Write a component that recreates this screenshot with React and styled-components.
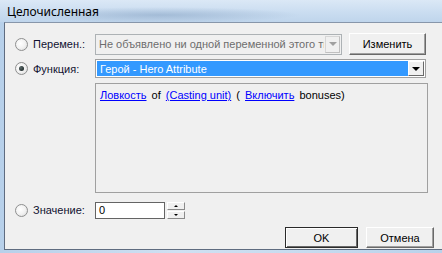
import React from 'react'
import styled, { createGlobalStyle } from 'styled-components'

const Global = createGlobalStyle`
  html, body { margin: 0; padding: 0; background: #bcd4ec; }
  body { font-family: "Liberation Sans", Arial, sans-serif; font-size: 11px; }
`

const Window = styled.div`
  width: 442px;
  height: 253px;
  display: flex;
  flex-direction: column;
  background: linear-gradient(90deg, #b7d0ea 0%, #cfe0f2 40%, #c6dbef 70%, #b9d2eb 100%);
  overflow: hidden;
`

const TitleBar = styled.div`
  height: 22px;
  display: flex;
  align-items: center;
  padding-left: 7px;
  font-family: "Noto Sans", "Open Sans", sans-serif;
  font-size: 12px;
  color: #000;
  background:
    radial-gradient(ellipse 140px 8px at 160px 15px, rgba(120,150,185,0.45), transparent),
    linear-gradient(180deg, #dbe8f6 0%, #c9dcf0 60%, #bfd5ec 100%);
`

const Client = styled.div`
  margin-left: 4px;
  height: 228px;
  background: #f0f0f0;
  border-left: 1px solid #5f6c80;
  border-top: 1px solid #8796aa;
  border-bottom: 1px solid #5f6c80;
  display: flex;
  flex-direction: column;
  padding: 10px 0 0 10px;
  box-sizing: border-box;
`

const Row = styled.div`
  display: flex;
  align-items: center;
  height: ${p => p.h}px;
  margin-top: ${p => p.mt || 0}px;
`

const Choice = styled.label`
  width: 80px;
  display: flex;
  align-items: center;
  gap: 5px;
  color: #101030;
`

const Radio = styled.span`
  width: 11px;
  height: 11px;
  border-radius: 50%;
  border: 1px solid #8e8f8f;
  background: radial-gradient(circle at 40% 40%, #ffffff 0%, #f2f2f2 50%, #d6d6d6 100%);
  display: flex;
  align-items: center;
  justify-content: center;
  flex: none;
  &::after {
    content: '';
    width: 5px;
    height: 5px;
    border-radius: 50%;
    background: ${p => (p.checked ? 'radial-gradient(circle at 35% 35%, #5a6a6a, #101818)' : 'transparent')};
  }
`

const Combo = styled.div`
  width: ${p => p.w}px;
  height: ${p => p.h}px;
  box-sizing: border-box;
  display: flex;
  align-items: stretch;
  border: 1px solid ${p => (p.disabled ? '#adb2b5' : '#a0a0a0')};
  background: ${p => (p.disabled ? '#f0f0f0' : '#fff')};
  padding: ${p => (p.disabled ? '0' : '1px')};
`

const ComboText = styled.div`
  flex: 1;
  overflow: hidden;
  white-space: nowrap;
  display: flex;
  align-items: center;
  padding-left: 3px;
  color: ${p => (p.selected ? '#fff' : '#6d6d6d')};
  background: ${p => (p.selected ? '#3399ff' : 'transparent')};
  font-size: 11px;
`

const Arrow = styled.div`
  width: ${p => (p.disabled ? 15 : 16)}px;
  flex: none;
  box-sizing: border-box;
  display: flex;
  align-items: center;
  justify-content: center;
  background: #f0f0f0;
  border: 1px solid;
  border-color: ${p => (p.disabled ? '#d6d6d6 #c0c0c0 #c0c0c0 #d6d6d6' : '#fff #696969 #696969 #fff')};
  margin: ${p => (p.disabled ? '1px' : '0')};
  &::after {
    content: '';
    border-left: 4px solid transparent;
    border-right: 4px solid transparent;
    border-top: 4px solid ${p => (p.disabled ? '#a0a0a0' : '#000')};
  }
`

const Button = styled.button`
  width: ${p => p.w}px;
  height: ${p => p.h || 21}px;
  margin-left: ${p => p.ml || 0}px;
  box-sizing: border-box;
  padding: 0;
  font-family: "Liberation Sans", Arial, sans-serif;
  font-size: 11px;
  color: #000;
  background: #f0f0f0;
  border: 1px solid;
  border-color: ${p => (p.primary ? '#2a2a2a' : '#fff #696969 #696969 #fff')};
  box-shadow: ${p => (p.primary ? 'inset 1px 1px 0 #fff, inset -1px -1px 0 #696969' : 'inset -1px -1px 0 #a0a0a0')};
`

const Panel = styled.div`
  margin-left: 80px;
  margin-top: 5px;
  width: 333px;
  height: 110px;
  box-sizing: border-box;
  border: 1px solid #a0a0a0;
  padding: 5px 4px;
  color: #000;
  font-size: 11px;
  line-height: 13px;
  word-spacing: 2px;
`

const Link = styled.a`
  color: #0000ff;
  text-decoration: underline;
  cursor: pointer;
  word-spacing: 0;
`

const TextBox = styled.div`
  width: 70px;
  height: 17px;
  box-sizing: border-box;
  border: 1px solid #646464;
  background: #fff;
  padding-left: 3px;
  display: flex;
  align-items: center;
  color: #000;
`

const Spinner = styled.div`
  width: 18px;
  height: 17px;
  margin-left: 2px;
  display: flex;
  flex-direction: column;
  gap: 1px;
`

const SpinBtn = styled.div`
  flex: 1;
  box-sizing: border-box;
  border: 1px solid;
  border-color: #fff #8a8a8a #8a8a8a #fff;
  background: #f0f0f0;
  display: flex;
  align-items: center;
  justify-content: center;
  &::after {
    content: '';
    border-left: 2px solid transparent;
    border-right: 2px solid transparent;
    ${p => (p.up ? 'border-bottom: 2px solid #000;' : 'border-top: 2px solid #000;')}
  }
`

const Footer = styled.div`
  display: flex;
  margin-top: 8px;
  padding-left: 270px;
`

export default function App() {
  return (
    <>
      <Global />
      <Window>
        <TitleBar>Целочисленная</TitleBar>
        <Client>
          <Row h={22}>
            <Choice>
              <Radio />
              Перемен.:
            </Choice>
            <Combo w={247} h={21} disabled>
              <ComboText>Не объявлено ни одной переменной этого ти</ComboText>
              <Arrow disabled />
            </Combo>
            <Button w={77} h={22} ml={7}>Изменить</Button>
          </Row>
          <Row h={19} mt={4}>
            <Choice>
              <Radio checked />
              Функция:
            </Choice>
            <Combo w={331} h={19}>
              <ComboText selected>Герой - Hero Attribute</ComboText>
              <Arrow />
            </Combo>
          </Row>
          <Panel>
            <Link>Ловкость</Link> of <Link>(Casting unit)</Link> ( <Link>Включить</Link> bonuses)
          </Panel>
          <Row h={18} mt={8}>
            <Choice>
              <Radio />
              Значение:
            </Choice>
            <TextBox>0</TextBox>
            <Spinner>
              <SpinBtn up />
              <SpinBtn />
            </Spinner>
          </Row>
          <Footer>
            <Button w={73} primary>OK</Button>
            <Button w={68} ml={8}>Отмена</Button>
          </Footer>
        </Client>
      </Window>
    </>
  )
}
